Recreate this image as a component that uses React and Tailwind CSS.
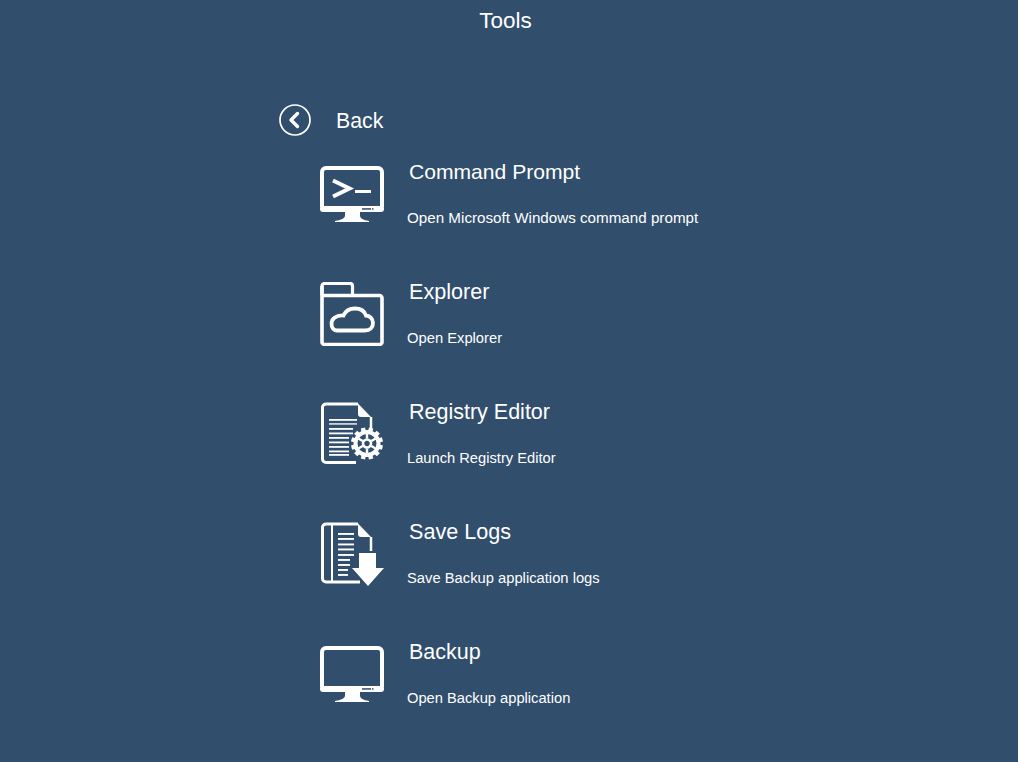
const BG = "#314e6c";

const Monitor = ({ prompt }) => (
  <svg width="66" height="64" viewBox="0 0 66 64" fill="none" className="block">
    <rect x="2" y="2" width="60" height="42" rx="4" stroke="#fff" strokeWidth="4" />
    <rect x="0" y="40" width="64" height="6" rx="3" fill="#fff" />
    <rect x="42" y="42.200" width="9" height="1.500" fill={BG} />
    <rect x="52" y="42.200" width="1.500" height="1.500" fill={BG} />
    <path d="M25 46H40V49.500C40 52.500 43 54 49 55V56H15V55C21 54 25 52.500 25 49.500Z" fill="#fff" />
    {prompt && (
      <>
        <path d="M13 14.500L29.500 22.500L13 30.500" stroke="#fff" strokeWidth="4" />
        <rect x="35" y="24" width="16" height="3" fill="#fff" />
      </>
    )}
  </svg>
);

const Folder = () => (
  <svg width="66" height="64" viewBox="0 0 66 64" fill="none" className="block">
    <path d="M2 13V4A2.500 2.500 0 0 1 4.500 1.500H30A2.500 2.500 0 0 1 32.500 4V13" stroke="#fff" strokeWidth="3.200" />
    <path d="M2 4V60A2.500 2.500 0 0 0 4.500 62.500H59.500A2.500 2.500 0 0 0 62 60V16A2.500 2.500 0 0 0 59.500 13.500H2" stroke="#fff" strokeWidth="3.600" />
    <path d="M17 48.500H45C50 48.500 53 45.500 53 41C53 36.500 49.500 33.500 46 33.500C44.500 29 40 26.500 35 26.500C29.500 26.500 25.500 29 23.500 33.500C15.500 33 11.500 37.500 11.500 41.500C11.500 45.500 13.500 48.500 17 48.500Z" stroke="#fff" strokeWidth="3.800" />
  </svg>
);

const Gear = () => {
  const teeth = Array.from({ length: 12 }, (_, i) => i * 30);
  return (
    <g>
      {teeth.map((a) => (
        <rect key={a} x="-2.200" y="-16" width="4.400" height="7" fill="#fff" transform={`rotate(${a + 15})`} />
      ))}
      <circle r="11.500" stroke="#fff" strokeWidth="4" fill={BG} />
      <circle r="4" stroke="#fff" strokeWidth="2.600" fill={BG} />
      {teeth.filter((a) => a % 60 === 0).map((a) => (
        <rect key={a} x="-1.200" y="-10" width="2.400" height="5" fill="#fff" transform={`rotate(${a})`} />
      ))}
    </g>
  );
};

const Registry = () => (
  <svg width="66" height="64" viewBox="0 0 66 64" fill="none" className="block">
    <path d="M38 2H6A3.500 3.500 0 0 0 2.500 5.500V57A3.500 3.500 0 0 0 6 60.500H36" stroke="#fff" strokeWidth="3" />
    <path d="M38 1.500L51 15H41A3 3 0 0 1 38 12Z" fill="#fff" />
    <path d="M51 15V26" stroke="#fff" strokeWidth="2.500" />
    {[17, 21, 26, 30.500, 35, 39.500, 44, 48.500, 52].map((y, i) => (
      <rect key={y} x="9" y={y} width={i < 2 ? 28 : i < 4 ? 24 : 20} height="1.800" fill={i === 1 ? "#c9d2da" : "#fff"} />
    ))}
    <g transform="translate(47 41.500)">
      <Gear />
    </g>
  </svg>
);

const SaveLogs = () => (
  <svg width="66" height="68" viewBox="0 0 66 68" fill="none" className="block">
    <path d="M38 2H6A3.500 3.500 0 0 0 2.500 5.500V56.500A3.500 3.500 0 0 0 6 60H40" stroke="#fff" strokeWidth="3" />
    <path d="M12 2V60" stroke="#fff" strokeWidth="2" />
    <path d="M38 1.500L51 15H41A3 3 0 0 1 38 12Z" fill="#fff" />
    <path d="M51 15V29" stroke="#fff" strokeWidth="2.500" />
    {[11, 16, 21.500, 26.500, 32, 37, 42, 47, 52].map((y, i) => (
      <rect key={y} x="18" y={y} width={i < 5 ? 16 : i < 7 ? 12 : 10} height="1.900" fill="#fff" />
    ))}
    <path d="M39 31H56V46H64L48 64L32 46H39Z" fill="#fff" />
  </svg>
);

const rows = [
  { icon: <Monitor prompt />, off: "", title: "Command Prompt", t: "text-[21.1px]", desc: "Open Microsoft Windows command prompt", d: "text-[15.2px]" },
  { icon: <Folder />, off: "-mt-[4px]", title: "Explorer", t: "text-[21.6px]", desc: "Open Explorer", d: "text-[14.75px]" },
  { icon: <Registry />, off: "-mt-[4px]", title: "Registry Editor", t: "text-[21.5px]", desc: "Launch Registry Editor", d: "text-[14.7px]" },
  { icon: <SaveLogs />, off: "-mt-[4px]", title: "Save Logs", t: "text-[21.6px]", desc: "Save Backup application logs", d: "text-[14.75px]" },
  { icon: <Monitor />, off: "", title: "Backup", t: "text-[21.5px]", desc: "Open Backup application", d: "text-[14.7px]" },
];

export default function App() {
  return (
    <div className="w-[1018px] h-[762px] overflow-hidden bg-[#314e6c] text-white font-['Liberation_Sans',Arial,sans-serif]">
      <div className="w-[1011px] h-[104px] pt-[8px] text-center text-[22.5px] leading-[26px]">Tools</div>
      <div className="flex items-center h-[32px] pl-[279px]">
        <svg width="32" height="32" viewBox="0 0 32 32" fill="none" className="block">
          <circle cx="16" cy="16" r="15" stroke="#fff" strokeWidth="1.700" />
          <path d="M18.500 9.500L12 16L18.500 22.500" stroke="#fff" strokeWidth="3.400" strokeLinecap="round" strokeLinejoin="round" />
        </svg>
        <span className="ml-[25px] mt-[2px] text-[21.3px] leading-[26px]">Back</span>
      </div>
      <div className="flex flex-col pl-[320px] pt-[30px]">
        {rows.map((r) => (
          <div key={r.title} className="flex h-[120px]">
            <div className={`w-[87px] shrink-0 ${r.off}`}>{r.icon}</div>
            <div className="flex flex-col">
              <div className={`ml-[2px] -mt-[7px] leading-[26px] ${r.t}`}>{r.title}</div>
              <div className={`mt-[23px] leading-[20px] ${r.d}`}>{r.desc}</div>
            </div>
          </div>
        ))}
      </div>
    </div>
  );
}
